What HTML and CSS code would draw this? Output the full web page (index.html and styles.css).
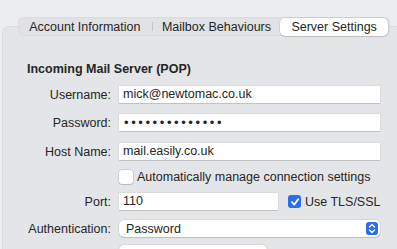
FILE: index.html
```html
<!DOCTYPE html>
<html>
<head>
<meta charset="utf-8">
<link rel="stylesheet" href="styles.css">
</head>
<body>
<div class="window">
  <div class="tabbar">
    <div class="tab t1">Account Information</div>
    <div class="sep"></div>
    <div class="tab t2">Mailbox Behaviours</div>
    <div class="tab selected">Server Settings</div>
  </div>
  <div class="panel">
    <div class="heading">Incoming Mail Server (POP)</div>
    <div class="form">
      <div class="row r-user">
        <div class="label">Username:</div>
        <div class="field wide">mick@newtomac.co.uk</div>
      </div>
      <div class="row r-pass">
        <div class="label">Password:</div>
        <div class="field wide dots">••••••••••••••</div>
      </div>
      <div class="row r-host">
        <div class="label">Host Name:</div>
        <div class="field wide">mail.easily.co.uk</div>
      </div>
      <div class="row r-auto">
        <div class="label"></div>
        <label class="check"><span class="box"></span><span>Automatically manage connection settings</span></label>
      </div>
      <div class="row r-port">
        <div class="label">Port:</div>
        <div class="field port">110</div>
        <label class="check tls"><span class="box on"><svg width="10" height="10" viewBox="0 0 10 10"><path d="M2 5.2 L4.2 7.6 L8.2 2.2" fill="none" stroke="#fff" stroke-width="1.8" stroke-linecap="round" stroke-linejoin="round"/></svg></span><span>Use TLS/SSL</span></label>
      </div>
      <div class="row r-auth">
        <div class="label">Authentication:</div>
        <div class="popup wide"><span>Password</span><span class="stepper"><svg width="8" height="11" viewBox="0 0 8 11"><path d="M1.5 4 L4 1.5 L6.5 4 M1.5 7 L4 9.5 L6.5 7" fill="none" stroke="#fff" stroke-width="1.4" stroke-linecap="round" stroke-linejoin="round"/></svg></span></div>
      </div>
      <div class="row r-next">
        <div class="label"></div>
        <div class="popup short"></div>
      </div>
    </div>
  </div>
</div>
</body>
</html>
```
FILE: styles.css
```css
* { box-sizing: border-box; }
html, body { margin: 0; padding: 0; }
body {
  width: 397px;
  height: 249px;
  overflow: hidden;
  background: #ebedef;
  font-family: "Liberation Sans", Arial, sans-serif;
  font-size: 12.5px;
  color: #262626;
}
.window {
  display: flex;
  flex-direction: column;
  padding-top: 17px;
}
.tabbar {
  position: relative;
  z-index: 1;
  display: flex;
  align-items: center;
  margin-left: 18px;
  width: 372px;
  height: 19px;
  margin-bottom: -9px;
  background: #e0e2e5;
  border-radius: 6px;
  box-shadow: inset 0 0 0 0.5px rgba(0,0,0,0.06);
  padding: 0 2px 0 0;
}
.tab {
  height: 18px;
  line-height: 18px;
  white-space: nowrap;
  text-align: center;
}
.t1 { width: 134px; }
.t2 { width: 128px; }
.sep {
  width: 1px;
  height: 9px;
  background: #c4c6c9;
}
.tab.selected {
  margin-left: auto;
  width: 108px;
  background: #fff;
  border-radius: 5px;
  box-shadow: 0 0 0 0.5px rgba(0,0,0,0.12), 0 1px 1px rgba(0,0,0,0.12);
}
.panel {
  margin-left: 3px;
  height: 222px;
  overflow: hidden;
  background: #e3e5e8;
  border-top-left-radius: 7px;
  box-shadow: 0 0 0 1px #d9dbde;
  padding: 35px 0 0 24px;
}
.heading {
  font-weight: 700;
  height: 14px;
  line-height: 14px;
}
.form {
  display: flex;
  flex-direction: column;
  margin-top: 10px;
  padding: 1px 0 0 1px;
}
.row {
  display: flex;
  align-items: center;
  height: 17px;
}
.label {
  width: 83px;
  margin-right: 8px;
  text-align: right;
  white-space: nowrap;
}
.field {
  height: 17px;
  line-height: 17px;
  background: #fff;
  padding-left: 4px;
  box-shadow: 0 0 0 0.5px rgba(0,0,0,0.08), 0 1px 0 rgba(0,0,0,0.12);
  white-space: nowrap;
}
.wide { width: 261px; }
.port { width: 159px; }
.dots { letter-spacing: 2.6px; font-size: 13px; padding-left: 5px; }
.r-user { margin-top: -1px; }
.r-pass { margin-top: 11px; }
.r-host { margin-top: 12px; }
.r-auto { margin-top: 10px; height: 14px; }
.r-port { margin-top: 9px; }
.r-auth { margin-top: 10px; }
.r-next { margin-top: 8px; }
.check {
  display: flex;
  align-items: center;
  white-space: nowrap;
}
.box {
  width: 14px;
  height: 14px;
  border-radius: 3px;
  background: #fff;
  box-shadow: 0 0 0 0.5px rgba(0,0,0,0.2), 0 1px 1px rgba(0,0,0,0.1);
  margin-right: 4px;
  display: flex;
  align-items: center;
  justify-content: center;
}
.box.on { background: #2a6ee8; box-shadow: none; width: 13px; height: 13px; }
.tls { margin-left: 10px; }
.popup {
  height: 17px;
  background: #fff;
  border-radius: 5px;
  box-shadow: 0 0 0 0.5px rgba(0,0,0,0.12), 0 1px 1px rgba(0,0,0,0.12);
  display: flex;
  align-items: center;
  justify-content: space-between;
  padding: 0 2px 0 7px;
}
.stepper {
  width: 12px;
  height: 13px;
  border-radius: 3px;
  background: #2a6ee8;
  display: flex;
  align-items: center;
  justify-content: center;
}
.short { width: 148px; }
```
